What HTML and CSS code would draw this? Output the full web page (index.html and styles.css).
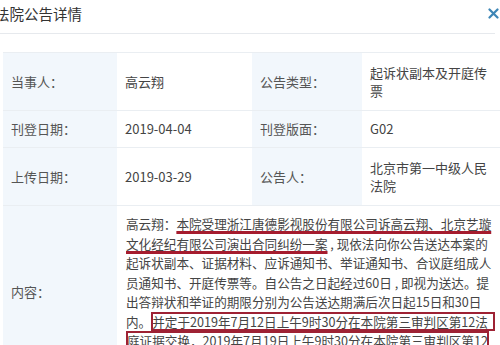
FILE: index.html
```html
<!DOCTYPE html>
<html lang="zh-CN">
<head>
  <meta charset="UTF-8" />
  <meta name="viewport" content="width=device-width, initial-scale=1.0" />
  <title>法院公告详情</title>
  <link rel="stylesheet" href="styles.css">
</head>
<body>
  <div class="dialog">
    <div class="dialog-head">
      <h3 class="dialog-title">法院公告详情</h3>
      <button class="dialog-close" aria-label="关闭">
        <svg width="11" height="11" viewBox="0 0 11 11">
          <path d="M1.5 1.5 L9.5 9.5 M9.5 1.5 L1.5 9.5" stroke="#3d86b6" stroke-width="2.2" stroke-linecap="round" fill="none"/>
        </svg>
      </button>
    </div>

    <div class="detail">
      <div class="cell label">当事人：</div>
      <div class="cell value">高云翔</div>
      <div class="cell label">公告类型：</div>
      <div class="cell value">起诉状副本及开庭传<br>票</div>

      <div class="cell label">刊登日期：</div>
      <div class="cell value">2019-04-04</div>
      <div class="cell label">刊登版面：</div>
      <div class="cell value">G02</div>

      <div class="cell label">上传日期：</div>
      <div class="cell value">2019-03-29</div>
      <div class="cell label">公告人：</div>
      <div class="cell value">北京市第一中级人民<br>法院</div>

      <div class="cell label">内容：</div>
      <div class="cell content">高云翔：<span class="mark-line">本院受理浙江唐德影视股份有限公司诉高云翔、北京艺璇<br>文化经纪有限公司演出合同纠纷一案</span> , 现依法向你公告送达本案的<br>起诉状副本、证据材料、应诉通知书、举证通知书、合议庭组成人<br>员通知书、开庭传票等。自公告之日起经过60日 , 即视为送达。提<br>出答辩状和举证的期限分别为公告送达期满后次日起15日和30日<br>内。<span class="mark-box">并定于2019年7月12日上午9时30分在本院第三审判区第12法&nbsp;&nbsp;<br>庭证据交换，2019年7月19日上午9时30分在本院第三审判区第12<br>法庭公开开庭审理</span>，逾期将依法缺席裁判。</div>
    </div>
  </div>
</body>
</html>
```

FILE: styles.css
```css
* {
  box-sizing: border-box;
  margin: 0;
  padding: 0;
}

body {
  width: 500px;
  height: 345px;
  overflow: hidden;
  background: #fff;
  color: #444;
  font-family: "Noto Sans CJK SC", "Microsoft YaHei", sans-serif;
}

/* header */
.dialog-head {
  display: flex;
  justify-content: space-between;
  align-items: center;
  height: 34px;
  padding-bottom: 6px;
  margin-right: 5px;
  border-bottom: 1px solid #e6e9ed;
}

.dialog-title {
  margin-left: -5px;
  font-size: 14.5px;
  font-weight: normal;
  color: #333;
}

.dialog-close {
  display: flex;
  margin-right: -4px;
  border: none;
  background: none;
  cursor: pointer;
}

/* detail grid */
.detail {
  display: grid;
  grid-template-columns: 114px 135px 110px 138px;
  grid-template-rows: 58px 37px 58px auto;
  margin: 18px 0 0 3px;
  font-size: 13px;
  line-height: 18px;
}

.cell {
  display: flex;
  align-items: center;
  padding: 0 8px;
  border-top: 1px solid #eaeef2;
  white-space: nowrap;
}

.label {
  background: #f2f7fc;
  color: #555;
}

.value {
  flex-direction: column;
  justify-content: center;
  align-items: flex-start;
  color: #444;
}

.content {
  display: block;
  grid-column: span 3;
  padding: 8px 4px 8px 9px;
  font-size: 12.6px;
  line-height: 19.5px;
  overflow: hidden;
}

/* red annotations */
.mark-line {
  text-decoration: underline;
  text-decoration-color: #a51c2e;
  text-decoration-thickness: 2.5px;
  text-underline-offset: 2px;
}

.mark-box {
  -webkit-box-decoration-break: clone;
  box-decoration-break: clone;
  padding: 0 1px;
  box-shadow: inset 0 0 0 2px #9e2234;
}
```
